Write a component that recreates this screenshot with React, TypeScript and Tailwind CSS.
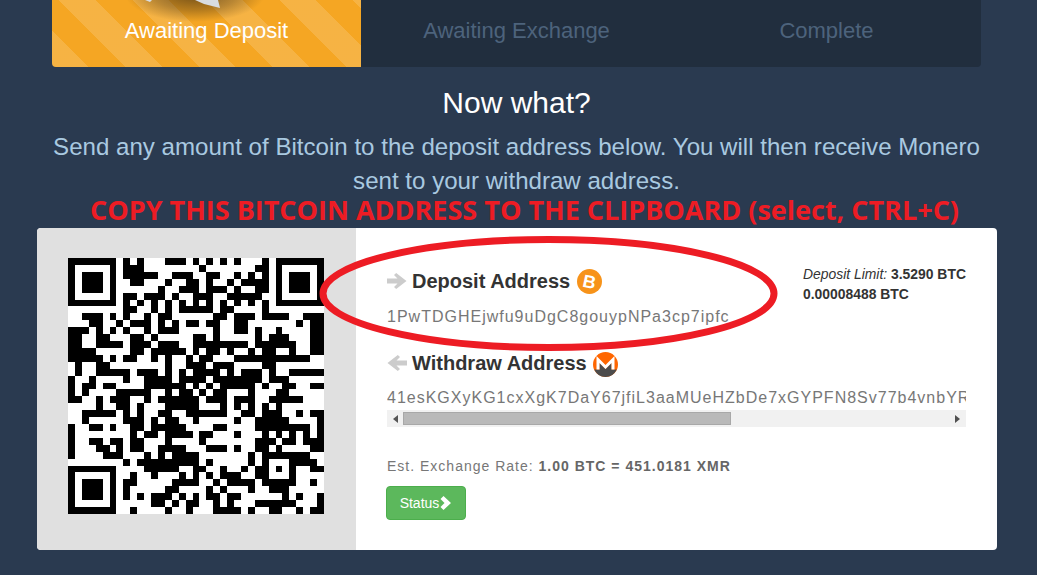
import React from "react";

const L = [
"1111111010100011101","1000001011100000000",
"101110101111"+"1001110","101110100110"+"0010011","101110100000"+"0100111","100000101101"+"1101001",
"1111111010101010101",
"000000001100"+"1010111","001110101001"+"0110000","000110010111"+"0101011","111010101001"+"0111000","110011000110"+"1000001",
"110011110111"+"0111001","111100000110"+"1111101","111110101100"+"1010010","010011000000"+"0010011","010011111011"+"1010101","100100001001"+"1110111","101101100001"+"1111101","101000011111"+"0010110","110010111001"+"0111111","000010011010"+"0011111",
"0011111010100110011","0010000011101011001","1001101001101111100","1000000001011011110","1001101101100010000","1000110101100111100","1000011100010101111","0000000010111111111","1111111000011111001","1000001001001000101","1011101011000001111","1011101010000011000","1011101010101110101","1000001000001101011","1111111001000010010",
];
const R = [
"0101010001"+"01111111","1000000011"+"01000001",
"0110010101"+"01011101","0100101111"+"01011101","0111010011"+"01011101","1100111110"+"01000001","0101010101"+"01111111","1101100001"+"00000000",
"0011011101"+"11100111","0110011000"+"00001011","0010011010"+"01000011","1010000010"+"11100011",
"1111111011"+"11110011","0110100101"+"10010011","1100011111"+"11111100","1011100001"+"10000000","1110101110"+"10011111","1011111110"+"11100000","0101111101"+"00110011","1011000100"+"01100000","0111011100"+"11111000","0001010101"+"01000000",
"1111001101"+"11001011","0000010011"+"11100001","0011000011"+"11111101","1100010001"+"01010101","1000000011"+"10110111","0111010011"+"01000011",
"000000010"+"11111"+"1100","010000010"+"10001"+"1110","100100101"+"10101"+"0011","010111001"+"10001"+"0000","001011110"+"11111"+"0010","010100010"+"01110"+"0000","011011000"+"00010"+"1001","001010001"+"11111"+"0001","001111010"+"01100"+"1011",
];

function QR() {
  const cells: React.ReactElement[] = [];
  L.forEach((row, y) => {
    const s = (row + R[y]).slice(0, 37);
    for (let x = 0; x < s.length; x++) {
      if (s[x] === "1") {
        let e = x;
        while (e + 1 < s.length && s[e + 1] === "1") e++;
        cells.push(<rect key={`${y}-${x}`} x={x} y={y} width={e - x + 1} height={1} />);
        x = e;
      }
    }
  });
  return (
    <svg width="256" height="256" viewBox="0 0 37 37" shapeRendering="crispEdges" className="bg-white block" fill="#000">
      {cells}
    </svg>
  );
}

function Arrow({ left }: { left?: boolean }) {
  return (
    <svg width="20" height="16" viewBox="0 0 20 16" className={left ? "-scale-x-100" : ""} fill="#cccccc">
      <path d="M0 5.5H10.5L7 2L9.2 0L19.5 8L9.2 16L7 14L10.5 10.5H0Z" />
    </svg>
  );
}

function Btc() {
  return (
    <svg width="25" height="25" viewBox="0 0 25 25">
      <circle cx="12.5" cy="12.5" r="12.5" fill="#f7931a" />
      <text x="12.5" y="19" textAnchor="middle" transform="rotate(12 12.5 12.5)" fontSize="18" fontWeight="700" fill="#fff" fontFamily="'Liberation Sans', sans-serif">B</text>
    </svg>
  );
}

function Xmr() {
  return (
    <svg width="25" height="25" viewBox="0 0 25 25">
      <circle cx="12.5" cy="12.5" r="12.5" fill="#ff6600" />
      <path d="M1.2 17.5H6.5V11L12.5 17L18.5 11V17.5H23.8C21.8 22 17.5 25 12.5 25C7.5 25 3.2 22 1.2 17.5Z" fill="#4c4c4c" />
      <path d="M3.5 17.5V4L12.5 13L21.5 4V17.5H18.5V11L12.5 17L6.5 11V17.5Z" fill="#fff" />
    </svg>
  );
}

export default function App() {
  return (
    <div className="relative w-[1037px] h-[575px] overflow-hidden bg-[#2a3a50] font-['Liberation_Sans',Arial,sans-serif]">
      <div className="ml-[52px] w-[929px] h-[67px] flex rounded-b-[4px] overflow-hidden bg-[#212e3e]">
        <div className="relative w-[309px] flex justify-center bg-[#f5a623] bg-[repeating-linear-gradient(45deg,rgba(255,255,255,0.15)_0px,rgba(255,255,255,0.15)_26px,transparent_26px,transparent_52px)]">
          <div className="absolute left-[73px] -top-[34px] w-[140px] h-[56px] rounded-full bg-[radial-gradient(closest-side,rgba(70,50,20,0.75),rgba(70,50,20,0.35)_60%,transparent)]" />
          <svg className="absolute left-[90px] top-0" width="90" height="10" viewBox="0 0 90 10" fill="#d8dce0">
            <path d="M3 0H10L8 2Z" />
            <path d="M53 0H76L78 8L62 4Z" />
          </svg>
          <span className="relative mt-[16px] text-[22px] leading-[30px] text-white">Awaiting Deposit</span>
        </div>
        <div className="flex-1 flex justify-center"><span className="mt-[16px] text-[22px] leading-[30px] text-[#4d637c]">Awaiting Exchange</span></div>
        <div className="w-[309px] flex justify-center"><span className="mt-[16px] text-[22px] leading-[30px] text-[#4d637c]">Complete</span></div>
      </div>

      <div className="ml-[52px] w-[929px] text-center">
        <h2 className="mt-[17px] text-[30px] leading-[38px] text-white">Now what?</h2>
        <p className="mt-[8px] text-[24.1px] leading-[34px] text-[#a9c9e0]">
          Send any amount of Bitcoin to the deposit address below. You will then receive Monero sent to your withdraw address.
        </p>
      </div>

      <div className="mt-[30px] ml-[37px] w-[960px] h-[322px] flex bg-white rounded-[4px] overflow-hidden">
        <div className="w-[319px] bg-[#e0e0e0] pl-[31px] pt-[30px]"><QR /></div>
        <div className="flex-1 min-w-0 pl-[31px] pr-[31px] pt-[36px]">
          <div className="flex justify-between">
            <div className="flex items-center h-[34px]">
              <Arrow />
              <span className="ml-[5px] text-[20px] font-bold text-[#333333]">Deposit Address</span>
              <span className="ml-[7px]"><Btc /></span>
            </div>
            <div className="text-[13.9px] leading-[20px] text-[#333333] w-[163px] whitespace-nowrap">
              <i>Deposit Limit:</i> <b>3.5290 BTC</b><br /><b>0.00008488 BTC</b>
            </div>
          </div>
          <div className="mt-[3px] text-[16px] leading-[20px] tracking-[1px] text-[#777777]">1PwTDGHEjwfu9uDgC8gouypNPa3cp7ipfc</div>
          <div className="mt-[19px] flex items-center h-[34px]">
            <Arrow left />
            <span className="ml-[5px] text-[20px] font-bold text-[#333333]">Withdraw Address</span>
            <span className="ml-[6px] mt-[2px]"><Xmr /></span>
          </div>
          <div className="mt-[8px] overflow-hidden whitespace-nowrap text-[16px] leading-[20px] tracking-[1px] text-[#777777]">41esKGXyKG1cxXgK7DaY67jfiL3aaMUeHZbDe7xGYPFN8Sv77b4vnbYRA</div>
          <div className="mt-[2px] flex items-center h-[17px] bg-[#f1f1f1]">
            <div className="w-[16px] flex justify-center">
              <svg width="5" height="8" viewBox="0 0 5 8" fill="#555"><path d="M5 0V8L0 4Z" /></svg>
            </div>
            <div className="w-[328px] h-[13px] bg-[#b9b9b9] border border-[#a8a8a8]" />
            <div className="flex-1 flex justify-end pr-[6px]">
              <svg width="5" height="8" viewBox="0 0 5 8" fill="#505050"><path d="M0 0V8L5 4Z" /></svg>
            </div>
          </div>
          <div className="mt-[31px] text-[14px] leading-[17px] tracking-[1px] text-[#777777]">Est. Exchange Rate: <b className="text-[#666666]">1.00 BTC = 451.0181 XMR</b></div>
          <button className="mt-[11px] -ml-[1px] flex items-center justify-center w-[80px] h-[34px] rounded-[4px] bg-[#5cb85c] border border-[#4cae4c] text-[14px] text-white">
            Status
            <svg className="ml-[1px]" width="12" height="14" viewBox="0 0 12 14" fill="#fff"><path d="M3.5 0L11 7L3.5 14L0.5 11L4.5 7L0.5 3Z" /></svg>
          </button>
        </div>
      </div>

      <div className="absolute left-[90px] top-[192px] w-[880px] whitespace-nowrap font-['Open_Sans',sans-serif] text-[27px] leading-[36px] font-bold text-[#ed1c24]">COPY THIS BITCOIN ADDRESS TO THE CLIPBOARD (select, CTRL+C)</div>
      <svg className="absolute left-[318px] top-[235px] pointer-events-none" width="462" height="118" viewBox="0 0 462 118" fill="none">
        <ellipse cx="230.5" cy="58.5" rx="225.5" ry="54" stroke="#ed1c24" strokeWidth="7" />
      </svg>
    </div>
  );
}
